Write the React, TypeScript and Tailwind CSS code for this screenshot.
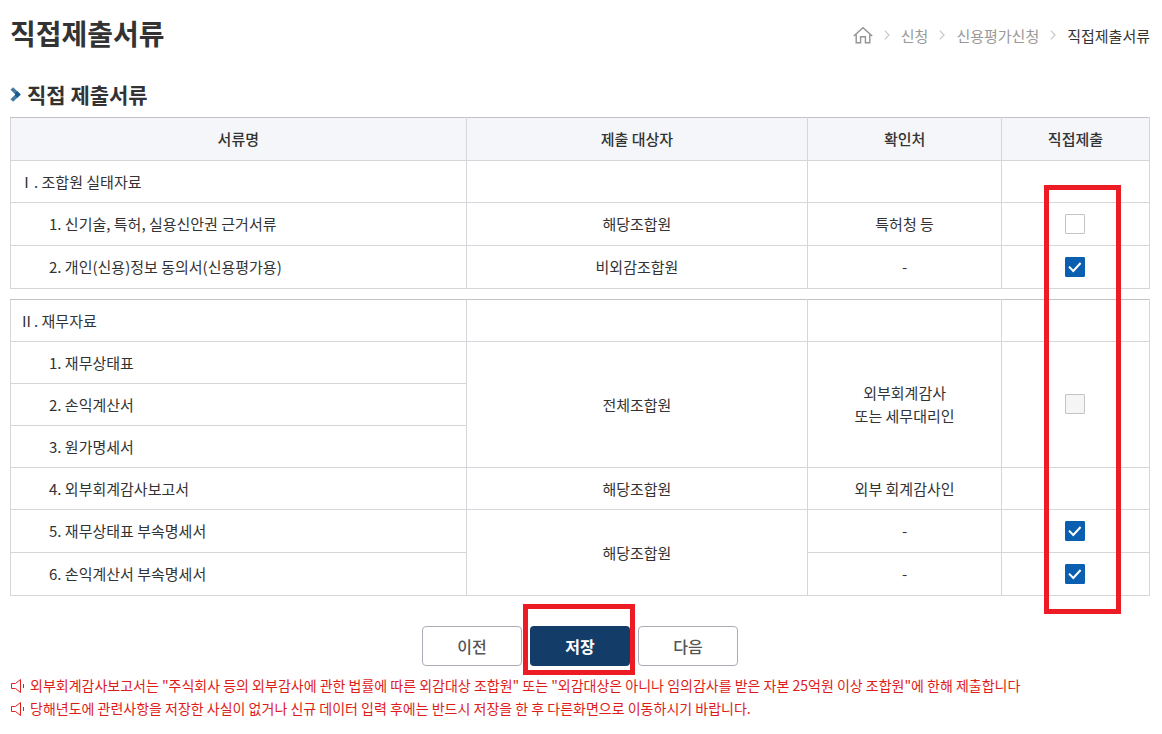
import type { ReactNode } from "react";

function CheckBox({ label, checked = false, disabled = false }: { label: string; checked?: boolean; disabled?: boolean }) {
  return (
    <div className="relative mx-auto size-5">
      <input
        type="checkbox"
        aria-label={label}
        defaultChecked={checked}
        disabled={disabled}
        className="peer block size-5 appearance-none rounded-[1px] border border-[#c4c4c4] bg-white checked:border-[#0b5fb0] checked:bg-[#0b5fb0] disabled:bg-[#f5f5f5]"
      />
      <svg
        viewBox="0 0 20 20"
        className="pointer-events-none absolute inset-0 hidden size-5 peer-checked:block"
        fill="none"
        stroke="#fff"
        strokeWidth="2"
        aria-hidden="true"
      >
        <path d="M4 9.6 8.3 14 15.6 6" />
      </svg>
    </div>
  );
}

function Columns() {
  return (
    <colgroup>
      <col className="w-[40%]" />
      <col className="w-[30%]" />
      <col className="w-[17%]" />
      <col className="w-[13%]" />
    </colgroup>
  );
}

function Cell({ children, rowSpan }: { children?: ReactNode; rowSpan?: number }) {
  return (
    <td rowSpan={rowSpan} className="border border-[#d5d6da] px-2 pb-px text-center">
      {children}
    </td>
  );
}

function Group({ children }: { children: ReactNode }) {
  return <td className="border border-[#d5d6da] px-2 pb-px">{children}</td>;
}

function Item({ children }: { children: ReactNode }) {
  return <td className="border border-[#d5d6da] pr-2 pb-px pl-[38px]">{children}</td>;
}

function Separator() {
  return (
    <svg width="6" height="10" viewBox="0 0 6 10" fill="none" stroke="#c8cacd" strokeWidth="1.3" aria-hidden="true">
      <path d="M.8.6 5 5 .8 9.4" />
    </svg>
  );
}

function Notice({ children }: { children: ReactNode }) {
  return (
    <li className="flex items-start gap-1.5">
      <svg width="14" height="23" viewBox="0 0 14 23" className="shrink-0" fill="none" stroke="#e0201c" aria-hidden="true">
        <path d="M1.5 9.5h4L10.5 5.5v13L5.5 14.5h-4zM13.5 10v4" />
      </svg>
      <span>{children}</span>
    </li>
  );
}

export default function App() {
  return (
    <main className="px-2.5 pr-3 pt-2.5 pb-3 font-['Noto_Sans_CJK_KR',sans-serif] text-[15px] leading-[23px] text-[#333]">
      <header className="flex items-center justify-between">
        <h1 className="text-[28px] leading-[46px] font-bold">직접제출서류</h1>
        <nav aria-label="현재 위치" className="pt-1">
          <ol className="flex items-center gap-[11px] text-[#999]">
            <li>
              <a href="#home" aria-label="홈" className="block">
                <svg width="20" height="18" viewBox="0 0 20 18" fill="none" stroke="#949494" strokeWidth="1.4" aria-hidden="true">
                  <path d="M.8 10 10 1.8l9.2 8.2M3.2 8.4v8.4h4.4v-6h4.8v6h4.4V8.4" />
                </svg>
              </a>
            </li>
            <li><Separator /></li>
            <li><a href="#apply">신청</a></li>
            <li><Separator /></li>
            <li><a href="#credit">신용평가신청</a></li>
            <li><Separator /></li>
            <li className="text-[#333]" aria-current="page">직접제출서류</li>
          </ol>
        </nav>
      </header>

      <h2 className="mt-[21px] flex items-center gap-1.5 text-[21px] leading-[34px] font-bold">
        <svg width="11" height="16" viewBox="0 0 11 16" fill="none" strokeWidth="3.8" aria-hidden="true">
          <path d="M1.8 2.5 8 8.5l-6.2 6" stroke="#437ba5" />
          <path d="M6 6.5 8 8.5 6 10.5" stroke="#17588d" />
        </svg>
        직접 제출서류
      </h2>

      <div className="relative mt-1.5 space-y-2.5">
        <table className="w-full table-fixed border-collapse border-t border-t-[#c2c3c6]">
          <Columns />
          <thead>
            <tr className="h-[43px] bg-[#f5f6f9]">
              {["서류명", "제출 대상자", "확인처", "직접제출"].map((title) => (
                <th key={title} scope="col" className="border border-[#d5d6da] border-t-[#c2c3c6] pb-0.5 font-medium">
                  {title}
                </th>
              ))}
            </tr>
          </thead>
          <tbody>
            <tr className="h-[42px]">
              <Group>Ⅰ. 조합원 실태자료</Group>
              <Cell />
              <Cell />
              <Cell />
            </tr>
            <tr className="h-[43px]">
              <Item>1. 신기술, 특허, 실용신안권 근거서류</Item>
              <Cell>해당조합원</Cell>
              <Cell>특허청 등</Cell>
              <Cell><CheckBox label="근거서류 직접제출" /></Cell>
            </tr>
            <tr className="h-[43px]">
              <Item>2. 개인(신용)정보 동의서(신용평가용)</Item>
              <Cell>비외감조합원</Cell>
              <Cell>-</Cell>
              <Cell><CheckBox label="동의서 직접제출" checked /></Cell>
            </tr>
          </tbody>
        </table>

        <table className="w-full table-fixed border-collapse border-t border-t-[#c2c3c6]">
          <Columns />
          <tbody>
            <tr className="h-[42px] *:border-t-[#c2c3c6]">
              <Group>Ⅱ. 재무자료</Group>
              <Cell />
              <Cell />
              <Cell />
            </tr>
            <tr className="h-[42px]">
              <Item>1. 재무상태표</Item>
              <Cell rowSpan={3}>전체조합원</Cell>
              <Cell rowSpan={3}>외부회계감사<br />또는 세무대리인</Cell>
              <Cell rowSpan={3}><CheckBox label="재무제표 직접제출" disabled /></Cell>
            </tr>
            <tr className="h-[42px]"><Item>2. 손익계산서</Item></tr>
            <tr className="h-[42px]"><Item>3. 원가명세서</Item></tr>
            <tr className="h-[42px]">
              <Item>4. 외부회계감사보고서</Item>
              <Cell>해당조합원</Cell>
              <Cell>외부 회계감사인</Cell>
              <Cell />
            </tr>
            <tr className="h-[43px]">
              <Item>5. 재무상태표 부속명세서</Item>
              <Cell rowSpan={2}>해당조합원</Cell>
              <Cell>-</Cell>
              <Cell><CheckBox label="재무상태표 부속명세서 직접제출" checked /></Cell>
            </tr>
            <tr className="h-[43px]">
              <Item>6. 손익계산서 부속명세서</Item>
              <Cell>-</Cell>
              <Cell><CheckBox label="손익계산서 부속명세서 직접제출" checked /></Cell>
            </tr>
          </tbody>
        </table>
        <div className="pointer-events-none absolute top-[68px] right-[29px] -bottom-[18px] w-[77px] border-5 border-[#ed1c24]" />
      </div>

      <div className="mt-[30px] flex justify-center gap-2 text-base leading-6">
        <button type="button" className="h-10 w-[100px] rounded-sm border border-[#acacb6] bg-white font-medium text-[#555]">이전</button>
        <div className="relative">
          <button type="button" className="h-10 w-[100px] rounded-sm bg-[#143c69] font-bold text-white">저장</button>
          <div className="pointer-events-none absolute -top-[22px] -right-[5px] -bottom-[9px] -left-[7px] border-5 border-[#ed1c24]" />
        </div>
        <button type="button" className="h-10 w-[100px] rounded-sm border border-[#acacb6] bg-white font-medium text-[#555]">다음</button>
      </div>

      <ul className="mt-2 text-sm leading-[23px] text-[#dd1c1a]">
        <Notice>외부회계감사보고서는 "주식회사 등의 외부감사에 관한 법률에 따른 외감대상 조합원" 또는 "외감대상은 아니나 임의감사를 받은 자본 25억원 이상 조합원"에 한해 제출합니다</Notice>
        <Notice>당해년도에 관련사항을 저장한 사실이 없거나 신규 데이터 입력 후에는 반드시 저장을 한 후 다른화면으로 이동하시기 바랍니다.</Notice>
      </ul>
    </main>
  );
}
